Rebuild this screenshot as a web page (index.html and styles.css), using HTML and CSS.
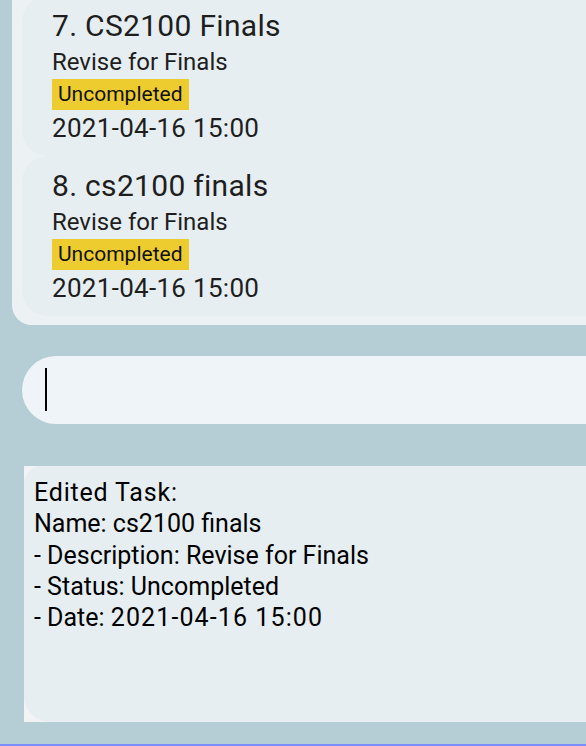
FILE: index.html
```html
<!DOCTYPE html>
<html lang="en">
<head>
<meta charset="utf-8">
<title>Task Manager</title>
<link rel="stylesheet" href="styles.css">
</head>
<body>
<div class="app">
  <section class="list-panel">
    <div class="list-scroll">
      <article class="card">
        <div class="card-title">7. CS2100 Finals</div>
        <div class="card-desc">Revise for Finals</div>
        <div class="badge-row"><span class="badge">Uncompleted</span></div>
        <div class="card-date">2021-04-16 15:00</div>
      </article>
      <article class="card">
        <div class="card-title">8. cs2100 finals</div>
        <div class="card-desc">Revise for Finals</div>
        <div class="badge-row"><span class="badge">Uncompleted</span></div>
        <div class="card-date">2021-04-16 15:00</div>
      </article>
    </div>
  </section>
  <div class="command-box"><span class="caret"></span></div>
  <section class="result-outer">
    <div class="result">
      <div class="result-line wide">Edited Task:</div>
      <div class="result-line">Name: cs2100 finals</div>
      <div class="result-line">- Description: Revise for Finals</div>
      <div class="result-line">- Status: Uncompleted</div>
      <div class="result-line">- Date: <span class="num">2021-04-16 15:00</span></div>
    </div>
  </section>
  <div class="spacer"></div>
  <div class="focus-line"></div>
</div>
</body>
</html>
```
FILE: styles.css
```css
html, body {
  margin: 0;
  padding: 0;
}
body {
  background: #b5cdd5;
  font-family: Roboto, "Liberation Sans", sans-serif;
  width: 586px;
  height: 746px;
  overflow: hidden;
}
.app {
  display: flex;
  flex-direction: column;
  height: 746px;
}
.list-panel {
  margin-left: 12px;
  height: 325px;
  flex: 0 0 auto;
  background: #ecf2f4;
  border-radius: 0 0 0 20px;
  overflow: hidden;
  padding-left: 10px;
  box-sizing: border-box;
}
.list-scroll {
  margin-top: -4px;
}
.card {
  background: #e6eef1;
  border-radius: 26px 0 0 26px;
  padding: 10px 0 13px 30px;
  height: 160px;
  box-sizing: border-box;
  color: #1e1e1e;
}
.card-title {
  font-size: 30px;
  line-height: 40px;
  letter-spacing: 0.3px;
}
.card-desc {
  font-size: 24px;
  line-height: 33px;
}
.badge-row {
  display: flex;
  height: 31px;
}
.badge {
  background: #edcc2f;
  color: #111;
  font-size: 21px;
  line-height: 31px;
  padding: 0 7px 0 6px;
}
.card-date {
  margin-top: 3px;
  font-size: 26px;
  line-height: 30px;
  letter-spacing: 0.3px;
}
.command-box {
  margin-top: 31px;
  margin-left: 22px;
  height: 68px;
  flex: 0 0 auto;
  background: #eef4f7;
  border-radius: 34px 0 0 34px;
  display: flex;
  align-items: flex-start;
  padding-left: 23px;
  padding-top: 12px;
  box-sizing: border-box;
}
.caret {
  width: 2px;
  height: 43px;
  background: #000;
}
.result-outer {
  margin-top: 42px;
  margin-left: 24px;
  height: 256px;
  flex: 0 0 auto;
  background: #f1f3f4;
}
.result {
  height: 100%;
  background: #e6eef1;
  border-radius: 18px 0 0 26px;
  padding: 11px 0 0 10px;
  box-sizing: border-box;
  color: #000;
  font-size: 25px;
  line-height: 31.3px;
}
.wide {
  letter-spacing: 0.8px;
}
.num {
  letter-spacing: 1.1px;
}
.spacer {
  flex: 1 1 auto;
}
.focus-line {
  height: 2px;
  background: #7b8cfb;
  flex: 0 0 auto;
}
```
